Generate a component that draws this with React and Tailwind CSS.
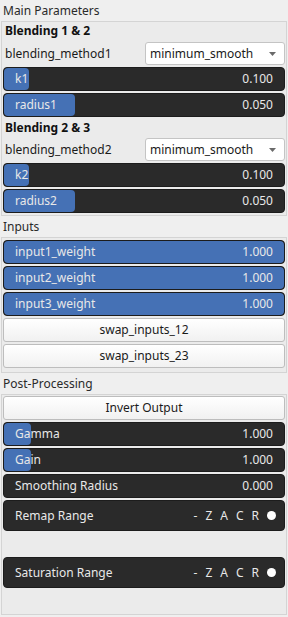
import React from 'react';

const font = { fontFamily: '"Noto Sans", "Open Sans", sans-serif' };

function Slider({ label, value, fill }) {
  return (
    <div className="relative h-[24px] rounded-[4px] bg-[#2a2a2a] border border-[#1c1c1c] overflow-hidden">
      <div className="absolute left-0 top-0 bottom-0 rounded-[4px] bg-[#4571b5]" style={{ width: fill }} />
      <div className="relative flex h-full items-center justify-between pl-[11px] pr-[11px] text-[12px] text-[#e8e8e8]">
        <span>{label}</span>
        <span>{value}</span>
      </div>
    </div>
  );
}

function Combo({ label, value }) {
  return (
    <div className="flex h-[23px] items-center">
      <span className="w-[142px] pl-[2px] text-[12px] text-[#1a1a1a]">{label}</span>
      <div className="flex h-full flex-1 items-center justify-between rounded-[3px] border border-[#c4c4c4] bg-white pl-[4px] pr-[8px] text-[12px] text-[#1a1a1a]">
        <span>{value}</span>
        <svg width="7" height="4" viewBox="0 0 7 4"><path d="M0 0 L7 0 L3.5 4 Z" fill="#6a6a6a" /></svg>
      </div>
    </div>
  );
}

function Button({ label }) {
  return (
    <div className="flex h-[24px] items-center justify-center rounded-[3px] border border-[#bdbdbd] bg-gradient-to-b from-[#ffffff] to-[#f1f1f1] text-[12px] text-[#1a1a1a]">
      {label}
    </div>
  );
}

function RangeRow({ label }) {
  return (
    <div className="flex h-[31px] items-center justify-between rounded-[4px] bg-[#2a2a2a] border border-[#1c1c1c] pl-[11px] pr-[8px] text-[12px] text-[#e8e8e8]">
      <span>{label}</span>
      <span className="flex items-center gap-[8px]">
        <span>-</span>
        <span>Z</span>
        <span>A</span>
        <span>C</span>
        <span>R</span>
        <span className="h-[9px] w-[9px] rounded-full bg-white" />
      </span>
    </div>
  );
}

function Title({ text }) {
  return <div className="flex h-[21px] items-center pl-[3px] text-[12px] text-[#2a2a2a]">{text}</div>;
}

export default function App() {
  return (
    <div className="h-[617px] w-[288px] overflow-hidden bg-[#efefef]" style={font}>
      <Title text="Main Parameters" />
      <div className="mx-[1px] flex flex-col gap-[2px] border border-[#d4d4d4] bg-[#ebebeb] px-[1px] pb-[2px]">
        <div className="flex h-[18px] items-center pl-[2px] text-[12px] font-bold text-[#111]">Blending 1 &amp; 2</div>
        <Combo label="blending_method1" value="minimum_smooth" />
        <Slider label="k1" value="0.100" fill="25px" />
        <Slider label="radius1" value="0.050" fill="71px" />
        <div className="flex h-[17px] items-center pl-[2px] text-[12px] font-bold text-[#111]">Blending 2 &amp; 3</div>
        <Combo label="blending_method2" value="minimum_smooth" />
        <Slider label="k2" value="0.100" fill="25px" />
        <Slider label="radius2" value="0.050" fill="71px" />
      </div>
      <Title text="Inputs" />
      <div className="mx-[1px] flex flex-col gap-[2px] border border-[#d4d4d4] bg-[#ebebeb] px-[1px] pt-[2px] pb-[4px]">
        <Slider label="input1_weight" value="1.000" fill="100%" />
        <Slider label="input2_weight" value="1.000" fill="100%" />
        <Slider label="input3_weight" value="1.000" fill="100%" />
        <Button label="swap_inputs_12" />
        <Button label="swap_inputs_23" />
      </div>
      <Title text="Post-Processing" />
      <div className="mx-[1px] flex h-[221px] flex-col gap-[2px] border border-[#d4d4d4] bg-[#ebebeb] px-[1px] pt-[1px]">
        <Button label="Invert Output" />
        <Slider label="Gamma" value="1.000" fill="27px" />
        <Slider label="Gain" value="1.000" fill="27px" />
        <Slider label="Smoothing Radius" value="0.000" fill="0px" />
        <RangeRow label="Remap Range" />
        <div className="h-[22px]" />
        <RangeRow label="Saturation Range" />
      </div>
    </div>
  );
}
